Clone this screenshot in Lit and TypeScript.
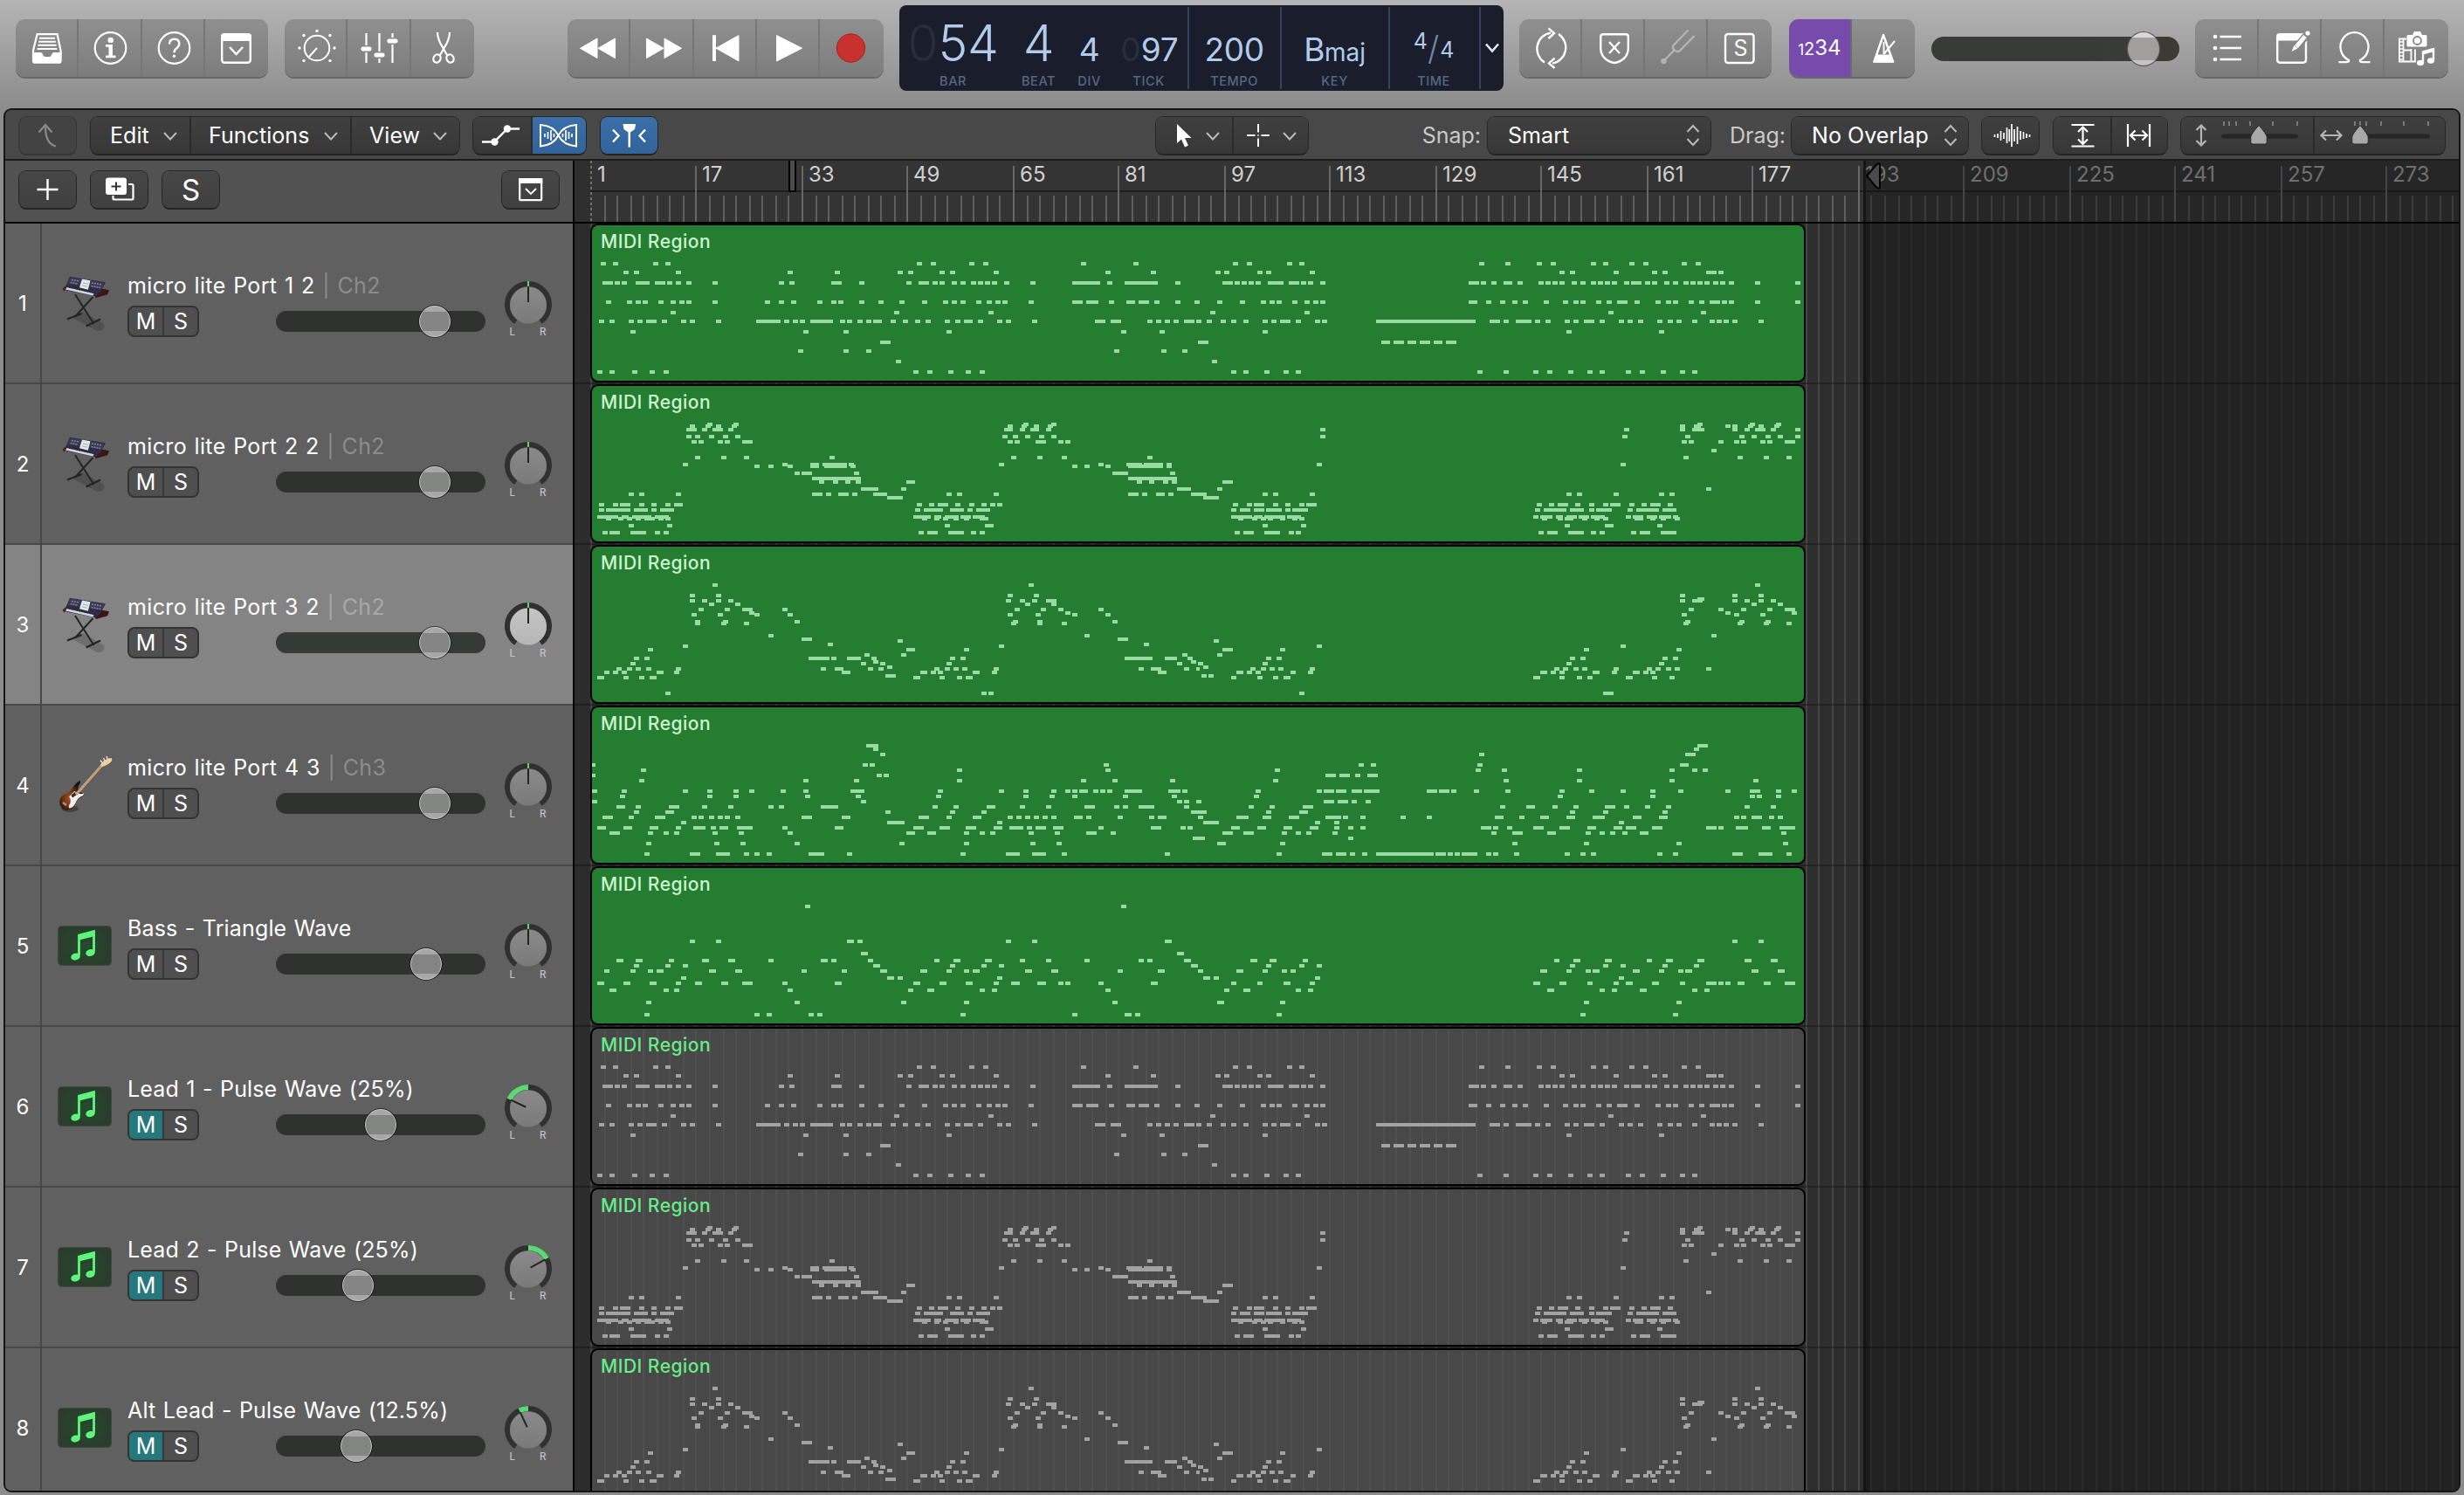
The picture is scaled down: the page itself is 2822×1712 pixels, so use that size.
import { LitElement, html, svg, css, nothing } from "lit";
import { customElement, property } from "lit/decorators.js";
import { classMap } from "lit/directives/class-map.js";

/* ------------------------------------------------------------------ */
/* MIDI patterns: one line per pitch, "offset: start start-end ...".    */
/* Starts are in ticks; each pattern is split in two halves.            */
/* ------------------------------------------------------------------ */
const TICKS_PER_PX = 2.24;
const HALF_PX = 700;

type Pattern = [string, string];

const LEAD: Pattern = [
  `42:40 72 175 206 851 887 986 1021 1272 1407
52:99 125 233 520 641 802 829 909 936 1048 1335 1452
64:45-72 76 94 130-166 179-206 211 233 260 327 497 524 632-659 703 824 856-883 892 909 941 963 990 1008 1026 1044 1075 1142 1250-1322 1340 1384-1469 1514
86:54 108 130 148 188 220 242 260 327 461 497 529 596 632 650 703 753 806 865 918 941 963 1004 1030 1053 1071 1138 1250-1277 1286-1317 1344 1390-1411 1420-1447 1460 1514 1563
98:220 793 1035
108:36 63 112 134 157-184 197 246 269 336 439-502 511 533 551 578-636 654 672 699 721 739-762 784 815 847 874 923 950 972-995 1008 1057 1080 1147 1308-1335 1348-1375 1443 1465 1487 1510 1537-1564
120:116 560 663 927 1375 1474
132:757-784
142:547 663 721 1357 1478 1532
154:797
166:31 63 121 166 202 842 878 932 977 1012`,
  `42:94 130 233 264 726 793 874 909 1012 1044 1111 1147 1245 1281
52:49 72 157 179 291 932 959 1071 1169 1196 1308-1335 1340
64:67-94 99 117 134 152 184-224 238-265 269 287 318 699-726 730 757 788-811 824 878 896 914 932 963 985 1012 1030 1048 1066 1098 1116-1142 1151 1169 1201 1223 1250 1268 1286 1304 1326 1344 1366 1434 1537
86:54 112 166 188 206 246 278 300 318 699-721 744 780 811 838 892 941 968 986 1026 1053 1080-1107 1124 1178 1205 1223 1263 1290 1317-1344 1348 1366 1434 1537
98:36 278 1057 1295
108:0-13 27 63 90 121 170 193 215-242 255 305 323 461-717 753-780 788 820-860 869 896 945 968 995-1021 1035 1084 1107 1133 1183 1210 1232 1272 1317 1335 1353 1375 1443
120:170 950 1187
132:4-31 475-497 506-533 542-564 573-600 609-632 641-668
154:40
166:90 121 175 224 255 721 788 865 900 954 1004 1035 1102 1138 1192 1241 1272`,
];

const SECOND: Pattern = [
  `42:314 381 1124 1196
44:269 309 336 377 1084 1120 1151 1189
48:260-287 301 327-354 367-381 1075-1098 1116 1142-1165 1183
56:260 282 318 354 385 1071 1098 1129 1165 1196
62:273 291 340 358 403-430 1084 1102 1156-1183 1214 1232
80:282 349 408 627 1093 1160 1223 1443
88:251 506 578-600 609-672 676-690 1062 1317 1389-1427 1432-1483 1492
90:435 470 520 578-600 614-672 681-694 1250 1281 1335 1394-1483 1492
98:538 556-582 690 1353-1393 1501
104:582-708 1393-1519
108:600 636 667 694-708 824-847 1416 1447 1483 1505-1519
116:708-753 811 1519-1555
122:112 139 233 582-609 618 650-676 685 739-775 927 954 1048 1393-1420 1429 1465-1487 1496 1555-1568
126:775-815
134:36 72 90-116 139 170 206 228-251 851 883 905-932 950 986 1017 1039 1057
140:36 54-116 125-161 170 193-228 847 869-918 936-972 981 1004-1039
148:31-85 92-112 121-172 178-215 842-888 896-914 923-959 963-990 995-1026
150:54 85 108 130 152 166 188 206-220 865 896 918 945 972 1012 1021
158:112 211 923 1026-1048
166:45 63-90 116-157 179 202 856 878-905 932-972 990 1012`,
  `42:1286 1420 1487
44:1241 1277-1295 1357 1375 1416 1443 1483
48:318 1098 1241 1272-1304 1375 1407 1434-1461 1474 1537
56:318 1093 1254 1393 1425 1460 1492 1537
62:1245 1263 1340 1380 1398 1447 1465 1510-1537
72:1322
80:1250 1389 1456 1514
88:309 1089
108:67-94
116:54 1308
122:0-27 170 197 291 950 977 1071 1187 1214
126:18-58
134:94 130 148-175 197 228 264 282-309 874 905 927-954 972 1008 1044 1062-1089 1111 1142 1165-1192 1210
140:90 112-139 148-175 179-220 228 246-287 869 892-950 959-995 1008 1026-1066 1107 1129-1187 1196-1232
148:90-143 148-170 175-228 233-270 865 883-914 923-940 950-977 981-1008 1012-1048 1102 1120-1147 1156-1183 1187-1219 1223
150:108 143 166 184 215 246 264 887 927 945-968 990 1021 1044 1124-1147 1165 1192 1228
158:170 269 945 1048-1071 1183
166:99 121-148 175-215 238 255 878 900-927 954-995 1012 1035 1116 1138-1165 1192-1232`,
];

const ALT: Pattern = [
  `42:327 1138
54:269 336 1084 1151
60:269 300 336 367 1080 1116 1147 1183-1210
64:318 385 1129 1196
70:291 358 403-430 506 1102 1169 1214 1317
74:421 1232
76:273 340 435 520 1084 1156 1250 1335
84:282 354 538 1098 1162 1353
86:282 349 408 1093 1160 1223
100:470 1281
104:556-582 1366-1393
106:802
110:623 1434
112:251 1062
116:161 824-847 972
122:717 811 1532
126:125 152 573-627 632 672-708 735 936 963 1384-1456 1487-1519 1545
130:739 1555
132:116 708 757 927 1519
136:775
138:81 108 130 157 233 605 641-663 726 753 896 923 945 968 1048 1420 1452-1478 1537
142:49 72 94 184-202 228 659-681 860-878 887 905 995-1012 1044 1469-1492
146:771-797
148:31-49 99 139 166-184 842-860 909 954 977-995
166:206 1017 1035`,
  `42:1434
54:1241 1375 1443
58:1286-1304
60:1241 1272-1299 1375 1407 1443 1474
64:1425 1492
70:1263 1340 1398 1465 1510-1537
74:1357 1528
76:1245 1380 1447
84:1254 1393 1460
86:1250 1389 1456 1514
100:1322
106:45
112:309 1089
116:67-94 215 995 1232
122:54
126:179 206 959 986 1196 1223
132:4 170 950 1187
136:18
138:0-9 139 166 188 211 291 918 941 968 990 1071 1156 1178 1205 1228 1308
142:103-121 130 152 242 287 883-900 909 932 1017-1035 1066 1120-1138 1147 1165
146:13 31
148:90 157 197 224-242 865-883 932 977 1004 1102-1120 1169 1214
166:264 1044-1071`,
];

const FOURTH: Pattern = [
  `42:721-753
46:739
52:757
64:18-27 712 730 1331
70:143 954 1335
76:18-27 748 766
82:139 560 690 954 1272 1353 1501
94:18-31 94 251 314 381 421 502 560 681-717 905 1062 1124 1196 1232 1250 1268-1290 1304 1322 1340 1384-1429 1496-1528 1532
100:90 314 381 564 694 900 1124 1192 1250 1380 1505
106:18-31 708 1519 1537
112:81-103 130 215-242 300 367 470 497 605-650 892 945 1030-1053 1116 1183 1281-1308 1357 1380 1420-1460 1537
118:125 206-228 771 936 1017 1555-1568
124:45-72 112 179-206 273 291 318 340 358 385 556-582 659-681 856-883 927 995-1017 1084 1107 1129 1151 1174 1196 1254-1277 1286 1366 1447 1469-1492
130:246 775-820 1057
136:31-54 99-121 166-188 233 278-309 323 345-367 390-430 506 641-663 842-869 909-936 977-1004 1048-1071 1089-1124 1133 1156-1183 1201-1228 1317 1452-1478 1528 1546
142:63-90 161 202 228 327 394 520 824-847 878-900 972 1012 1039 1138 1205 1286-1313 1348
148:1559
154:157 332 399 538 806 972 1142 1210
166:152 269-296 336-372 408 435 466 573-614 672 963 1080-1116 1147-1183 1223 1487`,
  `42:1286-1313
46:1277
52:726 1254-1281
64:417 448 721 1241-1263
70:202 717 784 977 1214 1272 1299
76:332-358 367-394 408 439-466
82:197 788 977 1214 1429
94:152 309 327-354 358-385 399-426 430-470 591-618 623-650 654 712 793 932 1008 1089 1165 1236 1357 1420-1447 1487 1528
100:148 927 1165 1420 1438 1487
106:0-13 327-354 363-390 399 435
112:134 188 273-300 780 847-869 914 968 1048-1075 1098 1151 1205 1407 1474
118:0-27 179 264-287 959 1044 1196
124:4 103-134 170-193 238-264 332-372 376 421 524 591 766-788 829 883-905 950-972 1017-1048 1120-1142 1187-1210 1380 1398 1425-1452 1469 1492
130:18-58 305 354 1084
136:90-112 157-179 224-246 291-314 354 390 421 730-757 762 797 865-892 932-959 1004-1026 1071-1093 1102-1129 1169-1196 1308-1335 1340 1384-1416 1452-1474 1496-1537
142:67-94 121-148 220 255 282 349 757 811-838 900-923 999 1035 1062 1093 1138-1160 1501
148:0 9 390
154:54-76 215 811 995 1232 1505
166:206 323-349 358-385 394 426 461-609 614-641 645 663 681-721 744 762 815 945 986 1012 1183 1223 1375-1402 1443-1478 1514`,
];

const BASS: Pattern = [
  `42:564 1375
82:269 336 672-690 699 1080 1147 1487-1505
96:708-726 1519-1537
104:81-99 130-148 215 300-318 367-385 470 605-623 632 726 896 945-963 1026-1044 1116 1183 1281 1420 1443 1537-1555
110:125 206 251 739-757 936 1017 1062 1555-1568
116:49 116 161 184-202 318-336 385-403 556 659 757-775 860-878 927 972 995-1012 1129-1147 1196-1214 1366 1469-1487
124:246 775-793 802 1057
130:31-49 99-116 166-184 233 282-300 349-367 403-430 506 641-659 842-860 909-927 977-995 1048 1093-1116 1160-1183 1214 1232 1317 1452-1469
138:63-81 202 228 520 829 878-896 1012 1044 1335
152:157 538 811 972 1353
166:152 435 466 573-587 596 963 1250 1384-1402 1411`,
  `82:1375 1443
104:139-157 188-206 273 918 968-986 1048-1066 1156 1205-1223 1286-1304 1407-1425 1474-1492
110:0-4 179 264 309 959 1044 1089 1196 1277
116:4 103-121 170 220 242 883-900 950 999 1017-1035 1120-1138 1187 1236 1254-1272 1425-1443 1492-1510
124:18-36 45 305 1084
130:90 157 224-242 291 865-883 932-950 1004 1071 1102-1120 1169-1187 1241 1308-1335 1340 1357 1389-1407 1456-1474 1510-1537
138:72 121-139 255 287 900-918 1035 1066 1138-1156 1272 1304
152:54-72 215 995 1232
166:206 986 1223`,
];

/** Turns a pattern into one path of 4px-high note bars. */
function notePath(pattern: Pattern): string {
  let d = "";
  pattern.forEach((half, i) => {
    for (const line of half.split("\n")) {
      const [y, notes] = line.trim().split(":");
      for (const note of notes.split(" ")) {
        const [a, b] = note.split("-").map(Number);
        const snap = (t: number) => Math.round(t / TICKS_PER_PX / 2) * 2 + i * HALF_PX - 8;
        const x = snap(a);
        const w = b === undefined ? 6 : Math.max(2, snap(b) - x);
        d += `M${x} ${y}h${w}v4h${-w}z`;
      }
    }
  });
  return d;
}

/* ------------------------------------------------------------------ */
/* Data                                                                 */
/* ------------------------------------------------------------------ */
interface Track {
  name: string;
  channel?: string;
  icon: "keys" | "bass" | "note";
  volume: number;
  pan: number;
  muted?: boolean;
  selected?: boolean;
  pattern: Pattern;
}

const TRACKS: Track[] = [
  { name: "micro lite Port 1 2", channel: "Ch2", icon: "keys", volume: 164, pan: 0, pattern: LEAD },
  { name: "micro lite Port 2 2", channel: "Ch2", icon: "keys", volume: 164, pan: 0, pattern: SECOND },
  { name: "micro lite Port 3 2", channel: "Ch2", icon: "keys", volume: 164, pan: 0, selected: true, pattern: ALT },
  { name: "micro lite Port 4 3", channel: "Ch3", icon: "bass", volume: 164, pan: 0, pattern: FOURTH },
  { name: "Bass - Triangle Wave", icon: "note", volume: 154, pan: 0, pattern: BASS },
  { name: "Lead 1 - Pulse Wave (25%)", icon: "note", volume: 102, pan: -65, muted: true, pattern: LEAD },
  { name: "Lead 2 - Pulse Wave (25%)", icon: "note", volume: 76, pan: 61, muted: true, pattern: SECOND },
  { name: "Alt Lead - Pulse Wave (12.5%)", icon: "note", volume: 74, pan: -25, muted: true, pattern: ALT },
];

/* Timeline geometry, measured from the left edge of the timeline. */
const BAR_ONE = 18;
const TWO_BARS = 15.123;
const END_OF_SONG = 1476;
const TIMELINE_WIDTH = 2158;
const gridX = (k: number) => Math.round((BAR_ONE + k * TWO_BARS) / 2) * 2;

/* ------------------------------------------------------------------ */
/* Icons                                                                */
/* ------------------------------------------------------------------ */
const cell = (w: number, h: number, body: unknown) =>
  html`<svg width=${w} height=${h} viewBox="0 0 ${w} ${h}" fill="none" stroke="#fff" stroke-width="2.4">${body}</svg>`;
const big = (body: unknown) => cell(72, 66, body);
const small = (w: number, body: unknown) => cell(w, 42, body);

const boxChevron = svg`
  <rect x="19.2" y="17.2" width="32.6" height="32.6" rx="3"/>
  <path d="M18 20q0-4 4-4h27q4 0 4 4v5H18z" fill="#fff" stroke="none"/>
  <path d="M28 32l7.5 8 7.5-8"/>`;

const ICONS = {
  library: big(svg`
    <path d="M24.6 17.2h23l4 19v11.500q0 2-2 2H22q-2 0-2-2V36z" stroke-width="2.200"/>
    <path d="M19.500 38h9q2 0 2.600 2.500t3 2.500h4q2.400 0 3-2.500t2.600-2.500h9l-1 10q-.3 2-2 2H22q-1.700 0-2-2z" fill="#fff" stroke="none"/>
    <path d="M27 21.700h18M26.200 25.700h19.600M25.400 29.700h21.200M24.600 34h22.800" stroke-width="2"/>`),
  info: big(svg`
    <circle cx="36.500" cy="33" r="17.800" stroke-width="2.200"/>
    <circle cx="36.700" cy="24" r="3.200" fill="#fff" stroke="none"/>
    <path d="M31 29h8v12.500h3.500v2.700H31v-2.700h3.500v-9.700H31z" fill="#fff" stroke="none"/>`),
  help: big(svg`
    <circle cx="36.500" cy="33" r="17.800" stroke-width="2.200"/>
    <path d="M31 28.500q0-5.800 5.700-5.800 5.600 0 5.600 5.300 0 3-3 5.200-2.800 2-2.800 5"/>
    <circle cx="36.500" cy="42.300" r="1.700" fill="#fff" stroke="none"/>`),
  toolbarBox: big(boxChevron),
  dial: big(svg`
    <circle cx="37" cy="33" r="14.300" stroke-width="2"/>
    <path d="M37 33L28 43" stroke-width="2"/>
    <g fill="#fff" stroke="none"><circle cx="37" cy="13.500" r="1.700"/><circle cx="22" cy="18.500" r="1.700"/><circle cx="52" cy="18.500" r="1.700"/>
    <circle cx="17" cy="33" r="1.700"/><circle cx="57" cy="33" r="1.700"/><circle cx="22" cy="47.500" r="1.700"/><circle cx="52" cy="47.500" r="1.700"/></g>`),
  mixer: big(svg`
    <path d="M21.500 16v14M21.500 38v12M36.500 16v21M36.500 45v5M51.500 16v5M51.500 29v21" stroke-width="2.200"/>
    <g fill="#fff" stroke="none"><rect x="15.500" y="31.500" width="12" height="5" rx="2"/><rect x="30.500" y="38.500" width="12" height="5" rx="2"/><rect x="45.500" y="22.500" width="12" height="5" rx="2"/></g>`),
  scissors: big(svg`
    <path d="M30 15q0 5 3 12l8.500 15M44 15q0 5-3 12l-8.500 15" stroke-width="2.200"/>
    <ellipse cx="29.500" cy="45" rx="4" ry="4.800" transform="rotate(25 29.500 45)" stroke-width="2.200"/>
    <ellipse cx="44.500" cy="45" rx="4" ry="4.800" transform="rotate(-25 44.500 45)" stroke-width="2.200"/>`),
  rewind: big(svg`<path d="M14.500 33.300L34 22v22.600zM35 33.300L54.500 22v22.600z" fill="#fff" stroke="#fff" stroke-width="1" stroke-linejoin="round"/>`),
  forward: big(svg`<path d="M58.500 33.300L39 22v22.600zM38 33.300L18.500 22v22.600z" fill="#fff" stroke="#fff" stroke-width="1" stroke-linejoin="round"/>`),
  toStart: big(svg`<path d="M21 18.300h4v29.700h-4z" fill="#fff" stroke="none"/><path d="M25 33.200L51 18.500v29.400z" fill="#fff" stroke-width="1" stroke-linejoin="round"/>`),
  play: big(svg`<path d="M22.500 18.500L51.500 33.200 22.500 48z" fill="#fff" stroke-width="1" stroke-linejoin="round"/>`),
  record: big(svg`<circle cx="35.500" cy="33" r="16.300" fill="#c8312d" stroke="#a32521" stroke-width="1"/>`),
  cycle: big(svg`
    <path d="M29 49.500A18.500 18.500 0 0 1 36 15.600M45 17A18.500 18.500 0 0 1 38 50.600" stroke-width="2.400"/>
    <path d="M33.500 10.500l6.500 5.500-6.500 6M40.500 56l-6.500-5.500 6.500-6"/>`),
  replace: big(svg`
    <path d="M24 17.200h26q2.800 0 2.800 2.800v13q0 7.500-5 12-5.500 4.500-10.800 5-5.500-.5-10.800-5-5-4.500-5-12V20q0-2.800 2.800-2.800z"/>
    <path d="M31 26l12 13M43 26l-12 13"/>`),
  tuner: big(svg`<g stroke="#b4b4b4"><path d="M21 48L33.500 35.500M49.500 12.500L32.500 30q-1.500 2.500 1 5.500 3.500 2.500 6 1L56.500 19"/><circle cx="21.500" cy="48" r="2" fill="#b4b4b4"/></g>`),
  solo: big(svg`<rect x="20" y="17" width="32.500" height="33" rx="3"/>`),
  metronome: big(svg`
    <path d="M36 18L25.500 48.500h21.500z" stroke-linejoin="round"/><path d="M27.500 40.500h17.500l3.500 9H24z" fill="#fff" stroke="none"/>
    <path d="M36.500 40L49 25M36.500 26v14" stroke-width="2"/>`),
  list: big(svg`<g fill="#fff" stroke="none"><circle cx="23" cy="20" r="2.300"/><circle cx="23" cy="33" r="2.300"/><circle cx="23" cy="46" r="2.300"/></g><path d="M28.500 20H53M28.500 33H53M28.500 46H53"/>`),
  notepad: big(svg`
    <path d="M54 24v22.500q0 3.200-3.200 3.200H24.400q-3.200 0-3.200-3.200V19"/>
    <path d="M20 24.500V20q0-4 4-4h27l-7 8.500z" fill="#fff" stroke="none"/>
    <path d="M54.500 19L40.500 35.500" stroke="#868686" stroke-width="8"/>
    <path d="M53 19.500L43 31.500" stroke-width="5"/><path d="M40.500 30l4 3.500-7 3.500z" fill="#fff" stroke="none"/><circle cx="56" cy="16" r="2.600" fill="#fff" stroke="none"/>`),
  loop: big(svg`<path d="M19.500 49.200h8.500q4-.5 3-2.500A16 16.500 0 1 1 44 46.700q-1 2 3 2.500h8.500" stroke-width="2.300"/>`),
  media: big(svg`
    <path d="M25 22.500h-8v26h18v-14M21.500 23v25M30.500 34v14M21.500 35.500H31" stroke-width="1.800"/>
    <path d="M17 26h4M17 30h4M17 34h4M17 38h4M17 42h4M17 46h4" stroke-width="1.600"/>
    <path d="M27 18h5l2-4h7l2 4h4q1.500 0 1.500 1.500V30q0 1.500-1.500 1.500H27q-1.500 0-1.500-1.500V19.500Q25.500 18 27 18z" fill="#fff" stroke="none"/>
    <circle cx="37.500" cy="24.500" r="4.500" fill="#fff" stroke="#868686" stroke-width="1.800"/>
    <path d="M44 50V37.500l12-3.500v13" stroke-width="2.400"/><path d="M44 39l12-3.500" stroke-width="3"/>
    <ellipse cx="41" cy="50" rx="4" ry="3.200" fill="#fff" stroke="none"/><ellipse cx="53" cy="47.500" rx="4" ry="3.200" fill="#fff" stroke="none"/>`),
  up: small(65, svg`<path d="M42 33.500q-12-3-12-22M22.500 17.500L30 9l7.500 8.500" stroke="#8a8a8a" stroke-width="2.200"/>`),
  automation: small(66, svg`<path d="M10 28.500h14L39 13.500h14" /><circle cx="24.500" cy="28.500" r="4.200" fill="#fff" stroke="none"/><circle cx="39" cy="13.500" r="4.200" fill="#fff" stroke="none"/>`),
  flexMode: small(63, svg`
    <path d="M11 9v24.500Q26 32 31.500 21T52 9v24.500Q37 32 31.500 21T11 9z" stroke-width="2"/>
    <path d="M16 19v4M19.500 17v8M23 15v12M26.500 19v4M36.500 19v4M40 15v12M43.500 17v8M47 19v4" stroke-width="1.700"/>`),
  catch: small(65, svg`<path d="M14 14.500l6.500 7-6.500 7M51 14.500l-6.500 7 6.500 7"/><path d="M25.500 8h14.500l-1 6-5 3.500v17h-2.500v-17l-5-3.500z" fill="#fff" stroke="none"/>`),
  pointer: small(50, svg`<path d="M24 8v22l5-4.500 4 9 4-2-4-8.500h7.500z" fill="#fff" stroke="none"/>`),
  marquee: small(50, svg`<path d="M30 8v9.500M30 24.500V34M17 21h9.500M33.500 21H43" stroke-width="2"/><path d="M29.200 20.200h1.600v1.600h-1.600z" fill="#fff" stroke="none"/>`),
  wave: small(65, svg`<path d="M14.500 20v3M18 19v5M21.500 16v11M25 18v7M28.500 12v18M34 8v26M31.300 14v14M37 14v14M40.500 11v20M44 16v10M47.500 17v8M51 19v5M54.500 20v3" stroke-width="1.700"/>`),
  vZoom: small(65, svg`<path d="M20.500 9h26M20.500 33.500h26M33.500 11.500v19.500M28 17l5.500-5.500L39 17M28 25.500l5.500 5.500 5.500-5.500" stroke-width="2.200"/>`),
  hZoom: small(65, svg`<path d="M20 8v26M45 8v26M23.500 21h18M28.500 15.500L23 21l5.500 5.500M36.500 15.500L42 21l-5.500 5.500" stroke-width="2.200"/>`),
  plus: small(65, svg`<path d="M32.500 9v24M20.500 21h24" stroke-width="2.400"/>`),
  duplicate: small(65, svg`<path d="M43 15h4q1.500 0 1.500 1.500V31q0 1.500-1.500 1.500H27q-1.500 0-1.500-1.500v-3" stroke-width="2.200"/><path d="M20 7.500h18q3 0 3 3V24q0 3-3 3H20q-3 0-3-3V10.500q0-3 3-3z" fill="#fff" stroke="none"/><path d="M29 12.500v10M23.500 17.500h11" stroke="#333" stroke-width="2"/>`),
  headerBox: small(65, svg`<rect x="20.200" y="9.200" width="25" height="24" rx="1.500" stroke-width="2.200"/><path d="M19 8h27.300v6H19z" fill="#fff" stroke="none"/><path d="M27 20l6 6 6-6" stroke-width="1.800"/>`),
  chevron: html`<svg class="chev" width="16" height="10" viewBox="0 0 16 10" fill="none" stroke="#b9b9b9" stroke-width="2"><path d="M1 1l7 7.500L15 1"/></svg>`,
  upDown: html`<svg width="16" height="26" viewBox="0 0 16 26" fill="none" stroke="#b9b9b9" stroke-width="2"><path d="M1.500 9L8 2l6.500 7M1.500 17L8 24l6.500-7"/></svg>`,
};

const keysIcon = html`<svg width="58" height="72" viewBox="-1 0 58 72">
  <path d="M12 52l30 16q10 0 8-8L26 46z" fill="#000" opacity=".16"/>
  <path d="M17 26L38.500 60M37.500 29L17.500 51" stroke="#242428" stroke-width="2"/>
  <path d="M8 54.500l16.500-6.500M29.500 62.500l16.500-8" stroke="#242428" stroke-width="2.400"/>
  <path d="M45 19l11 2.300-2 5L41 30l-2-3z" fill="#3a1614"/>
  <path d="M11 5.700l41 6.600-6 11-5 5L2.700 20.700l4-5z" fill="#2a2c48"/>
  <path d="M12 6.500l39 6.300-4 7L8.500 14z" fill="#3a3b58"/>
  <path d="M13 9.500l9 1.500M11.500 12.500l9 1.500M36 13l12 2M35.500 16.500l11 2" stroke="#8b7f8a" stroke-width="1.500" stroke-dasharray="2 1"/>
  <path d="M7.500 18l31 7-1 2.500-31.500-7z" fill="#d4d4d8"/>
  <path d="M10 17.800l28 6.400" stroke="#2b2b36" stroke-width="1.500" stroke-dasharray="1.600 1.400"/>
  <path d="M2.500 19.500l3.500-3 1.500 1-3 5z" fill="#5c1d1d"/>
  <path d="M25 8.500l9.500 1.800-2.700 10.400L22 18.300z" fill="#e2e8ea"/>
  <path d="M26 13l6 1.200M25 16l6 1.200" stroke="#9fb3b3" stroke-width="1"/>
</svg>`;

const bassIcon = html`<svg width="64" height="68" viewBox="0 0 64 68">
  <defs><radialGradient id="b" cx=".42" cy=".6" r=".5"><stop offset="0" stop-color="#b0541c"/><stop offset=".6" stop-color="#6a2c10"/><stop offset="1" stop-color="#1a100d"/></radialGradient></defs>
  <ellipse cx="15" cy="61" rx="10" ry="4" fill="#000" opacity=".3"/>
  <path d="M26.700 28.700q1 3-2 6-1 4 0 6 3 3 7 2.500-1 5-5 5-3 2-5 7-3 7-9 7.500-6 .5-9-6-2-8 5-12 8-3 11-10 3-4 7-6z" fill="url(#b)"/>
  <path d="M20.500 41q3 2.500 6 3t5-1q-1 4-4.500 4.500-3.500 2-5.500 7-2.500 5.500-7 6-2-2 1-6 1-5-1.500-7z" fill="#f0f0f0"/>
  <path d="M16.500 45.500l4.500-3.500 2 3-5 3.500z" fill="#2a2a2a"/>
  <path d="M7 54l4 3" stroke="#999" stroke-width="2.500"/>
  <path d="M22 45L52 11" stroke="#c9a277" stroke-width="3"/>
  <path d="M24 43L51 12" stroke="#8d6a49" stroke-width=".8" stroke-dasharray="1 2.500"/>
  <path d="M50 12q1-4 4-6 4-3 8.500-3 1.500 1 0 4-3 3.500-10 6z" fill="#ecd0a4"/>
  <path d="M50 5.500l2 3M53.500 3l1.500 3M57 1l1 3" stroke="#ddd" stroke-width="1.500"/>
</svg>`;

const noteIcon = html`<svg width="62" height="46" viewBox="0 0 62 46">
  <defs><radialGradient id="g"><stop offset="0" stop-color="#264a2c"/><stop offset="1" stop-color="#2a3d2d"/></radialGradient></defs>
  <rect x=".500" y=".500" width="61" height="45" rx="4" fill="url(#g)" stroke="#3d4a3f"/>
  <path d="M24.500 34V11l17-4.500v23" fill="none" stroke="#5df57c" stroke-width="2.800"/>
  <path d="M24.500 10.500L42.800 6v6L24.500 16.500z" fill="#5df57c"/>
  <ellipse cx="20.500" cy="35.500" rx="5.300" ry="4" fill="#5df57c" transform="rotate(-15 20.500 35.500)"/>
  <ellipse cx="37.500" cy="31" rx="5.300" ry="4" fill="#5df57c" transform="rotate(-15 37.500 31)"/>
</svg>`;

const TRACK_ICONS = { keys: keysIcon, bass: bassIcon, note: noteIcon };

/* ------------------------------------------------------------------ */
/* Pan knob                                                             */
/* ------------------------------------------------------------------ */
@customElement("pan-knob")
export class PanKnob extends LitElement {
  @property({ type: Number }) pan = 0;
  @property({ type: Boolean }) lit = false;

  static styles = css`
    :host { display: block; width: 54px; height: 66px; }
    text { font: 500 11.5px Inter, "Liberation Sans", sans-serif; fill: #c4c4c4; }
  `;

  private polar(deg: number, r: number): [number, number] {
    const a = (deg * Math.PI) / 180;
    return [27 + r * Math.sin(a), 27 - r * Math.cos(a)];
  }

  render() {
    const arc = (from: number, to: number) => {
      const [x1, y1] = this.polar(from, 24);
      const [x2, y2] = this.polar(to, 24);
      return `M${x1} ${y1}A24 24 0 ${to - from > 180 ? 1 : 0} 1 ${x2} ${y2}`;
    };
    const p = this.pan;
    const [lx, ly] = this.polar(p, p ? 22 : 21);
    const [mx, my] = this.polar(p, 3);
    return html`<svg width="54" height="66" viewBox="0 0 54 66" fill="none">
      <defs><linearGradient id="k" x2="0" y2="1">
        <stop offset="0" stop-color=${this.lit ? "#c4c4c4" : "#8a8a8a"}/><stop offset="1" stop-color=${this.lit ? "#b6b6b6" : "#7a7a7a"}/>
      </linearGradient></defs>
      <path d=${arc(-144, 144)} stroke="#303030" stroke-width="6"/>
      <circle cx="27" cy="27.500" r="21" fill="url(#k)"/>
      <path d=${p === 0 ? "M27 0v6" : p < 0 ? arc(p, 0) : arc(0, p)} stroke="#5ad873" stroke-width=${p === 0 ? 2 : 6}/>
      <path d="M${lx} ${ly}L${mx} ${my}" stroke="#242424" stroke-width="2"/>
      <text x="5.500" y="62">L</text><text x="40" y="62">R</text>
    </svg>`;
  }
}

/* ------------------------------------------------------------------ */
/* Track header                                                         */
/* ------------------------------------------------------------------ */
@customElement("track-header")
export class TrackHeader extends LitElement {
  @property({ attribute: false }) track!: Track;
  @property({ type: Number }) index = 0;

  static styles = css`
    :host { display: block; height: 184px; flex: none; }
    .row { display: flex; box-sizing: border-box; height: 184px; background: #606060; border-bottom: 2px solid #484848; color: #fff; }
    .row.selected { background: #848484; }
    .num { width: 40px; flex: none; display: flex; align-items: center; justify-content: center; border-right: 2px solid #484848; font-size: 24px; }
    .icon { width: 98px; flex: none; display: flex; align-items: center; justify-content: center; box-sizing: border-box; }
    .main { display: flex; flex-direction: column; padding-top: 54px; width: 410px; flex: none; }
    .name { height: 34px; line-height: 34px; font-size: 25px; white-space: nowrap; letter-spacing: 0.15px; word-spacing: 1.2px; }
    .name.midi { letter-spacing: 0.35px; }
    .name .ch { color: #8c8c8c; }
    .selected .name .ch { color: #a8a8a8; }
    .controls { display: flex; align-items: center; height: 36px; margin-top: 6px; justify-content: space-between; }
    .ms { display: flex; width: 82px; height: 36px; box-sizing: border-box; border: 2px solid #333; border-radius: 8px; overflow: hidden; background: #4f4f4f; }
    .ms span { flex: 1; display: flex; align-items: center; justify-content: center; font-size: 25px; line-height: 32px; }
    .ms span + span { border-left: 2px solid #3a3a3a; }
    .ms .on { background: #27787d; }
    .fader { width: 240px; height: 24px; border-radius: 12px; background: #30322f; position: relative; }
    .selected .fader { background: #353a37; }
    .thumb { position: absolute; top: -6px; width: 34px; height: 34px; border-radius: 50%; border: 1px solid #c4c4c4; background: linear-gradient(#a8a8a8 17%, #838583 17% 82%, #a8a8a8 82%); box-shadow: 0 0 0 1px rgba(20, 20, 20, 0.7); }
    .pan { padding: 66px 0 0 22px; }
  `;

  render() {
    const t = this.track;
    return html`<div class=${classMap({ row: true, selected: !!t.selected })}>
      <div class="num">${this.index}</div>
      <div class="icon">${TRACK_ICONS[t.icon]}</div>
      <div class="main">
        <div class=${classMap({ name: true, midi: !!t.channel })}>${t.name}${t.channel ? html`<span class="ch"> | ${t.channel}</span>` : nothing}</div>
        <div class="controls">
          <div class="ms"><span class=${classMap({ on: !!t.muted })}>M</span><span>S</span></div>
          <div class="fader"><div class="thumb" style="left:${t.volume}px"></div></div>
        </div>
      </div>
      <div class="pan"><pan-knob .pan=${t.pan} .lit=${!!t.selected}></pan-knob></div>
    </div>`;
  }
}

/* ------------------------------------------------------------------ */
/* MIDI region                                                          */
/* ------------------------------------------------------------------ */
@customElement("midi-region")
export class MidiRegion extends LitElement {
  @property({ attribute: false }) track!: Track;

  static styles = css`
    :host { display: block; width: 1392px; height: 182px; }
    .region { display: grid; box-sizing: border-box; height: 182px; background: #257d32; border: 2px solid #000; border-radius: 9px; overflow: hidden; color: #cdf5cf; }
    .region > * { grid-area: 1 / 1; }
    .region svg { display: block; }
    .notes { fill: #9adba4; }
    .muted { background: #484848; color: #67ee8b; }
    .muted .notes { fill: #a2a2a2; }
    .label { padding: 5px 0 0 10px; font-size: 21px; font-weight: 500; line-height: 28px; height: 28px; letter-spacing: 0.5px; }
  `;

  render() {
    const bars = this.track.muted
      ? Array.from({ length: 92 }, (_, k) => `M${gridX(k + 1) - 20} 0h2v178h-2z`).join("")
      : "";
    return html`<div class=${classMap({ region: true, muted: !!this.track.muted })}>
      <svg width="1388" height="178" shape-rendering="crispEdges">
        <path d=${bars} fill="#505050"/>
        <path class="notes" d=${notePath(this.track.pattern)}/>
      </svg>
      <div class="label">MIDI Region</div>
    </div>`;
  }
}

/* ------------------------------------------------------------------ */
/* Ruler and lanes                                                      */
/* ------------------------------------------------------------------ */
@customElement("time-ruler")
export class TimeRuler extends LitElement {
  static styles = css`
    :host { display: block; height: 70px; width: 2158px; flex: none; border-bottom: 2px solid #000; }
    text { font: 24px Inter, "Liberation Sans", sans-serif; }
  `;

  render() {
    const ticks: unknown[] = [];
    for (let k = 0; k <= 141; k++) {
      const x = gridX(k);
      if (x > TIMELINE_WIDTH) break;
      const past = x > END_OF_SONG;
      const major = k % 8 === 0;
      if (k > 0)
        ticks.push(svg`<rect x=${x} y=${major ? 6 : 40} width="2" height=${major ? 64 : 30}
          fill=${past ? (major ? "#454545" : "#3b3b3b") : major ? "#686868" : "#5f5f5f"}/>`);
      if (major && k <= 136)
        ticks.push(svg`<text x=${x + 8} y="24" fill=${past || k === 96 ? "#6f6f6f" : "#d0d0d0"}>${k * 2 + 1}</text>`);
    }
    return html`<svg width="2158" height="70" style="display:block">
      <g shape-rendering="crispEdges">
        <rect width="2158" height="70" fill="#343434"/>
        <rect width="18" height="70" fill="#2f2f2f"/>
        <rect x=${END_OF_SONG} width="700" height="70" fill="#262626"/>
        <rect x="18" y="34" width="1458" height="2" fill="#1e1e1e"/>
        <rect x=${END_OF_SONG} y="34" width="700" height="2" fill="#181818"/>
        <path d="M19 0v70" stroke="#707070" stroke-width="2" stroke-dasharray="3 3"/>
        <rect x=${END_OF_SONG} width="3" height="70" fill="#161616"/>
      </g>
      ${ticks}
      <rect x="246" y="-2" width="7" height="37" fill="#4a4a4a" stroke="#000" stroke-width="2"/>
      <path d="M1480 17.500L1491 4.500q4-3 4 1v24q0 4-4 1z" fill="#4a4a4a" stroke="#000" stroke-width="2"/>
    </svg>`;
  }
}

@customElement("track-lanes")
export class TrackLanes extends LitElement {
  static styles = css`
    :host { display: grid; width: 2158px; height: 1451px; overflow: hidden; grid-template-rows: 1451px; }
    .grid, .lanes { grid-area: 1 / 1; }
    .grid { display: block; }
    .lane { box-sizing: border-box; height: 184px; padding-left: 18px; border-bottom: 2px solid rgba(0, 0, 0, 0.28); }
  `;

  render() {
    const near: string[] = [];
    const far: string[] = [];
    for (let k = 0; gridX(k) < TIMELINE_WIDTH; k++) {
      const x = gridX(k);
      (x > END_OF_SONG ? far : near).push(`M${x} 0h2v1451h-2z`);
    }
    return html`
      <svg class="grid" width="2158" height="1451" shape-rendering="crispEdges">
        <rect width="2158" height="1451" fill="#2e2e2e"/>
        <rect width="18" height="1451" fill="#2c2c2c"/>
        <path d=${near.join("")} fill="#464646"/>
        <rect x=${END_OF_SONG} width="700" height="1451" fill="#222"/>
        <path d=${far.join("")} fill="#2b2b2b"/>
        <rect x=${END_OF_SONG} width="3" height="1451" fill="#131313"/>
        <rect x=${END_OF_SONG + 3} width="5" height="1451" fill="#1c1c1c"/>
      </svg>
      <div class="lanes">
        ${TRACKS.map((t) => html`<div class="lane"><midi-region .track=${t}></midi-region></div>`)}
      </div>`;
  }
}

/* ------------------------------------------------------------------ */
/* Transport display                                                    */
/* ------------------------------------------------------------------ */
@customElement("transport-display")
export class TransportDisplay extends LitElement {
  static styles = css`
    :host { display: flex; box-sizing: border-box; width: 692px; height: 98px; background: #1a1d2c; border-radius: 8px; color: #b3cbea; }
    .sec { display: flex; margin: 2px 0; box-sizing: border-box; border-right: 2px solid #36445a; padding-top: 12px; justify-content: center; }
    .position { width: 332px; padding-left: 9px; justify-content: flex-start; }
    .tempo { width: 106px; } .key { width: 124px; } .time { width: 104px; padding-right: 1px; }
    .col { display: flex; flex-direction: column; align-items: center; flex: none; }
    .bar { width: 106px; margin-right: 17px; }
    .beat { width: 56px; margin-right: 2px; } .div { width: 56px; } .tick { width: 80px; }
    .val { height: 60px; line-height: 60px; font-size: 57px; font-weight: 300; white-space: nowrap; letter-spacing: -0.3px; }
    .val .m { font-size: 37px; line-height: 1; font-weight: 400; letter-spacing: -0.4px; }
    .tick .val .m { letter-spacing: 0; margin-left: 2px; }
    .val .s { font-size: 28px; line-height: 1; font-weight: 400; letter-spacing: 0; }
    .val .up { font-size: 25px; line-height: 0; font-weight: 400; position: relative; top: -14px; letter-spacing: 0; }
    .val .low { font-size: 25px; line-height: 0; font-weight: 400; position: relative; top: -4px; letter-spacing: 0; }
    .val .slash { font-size: 38px; line-height: 0; font-weight: 300; color: #7286a3; letter-spacing: 1px; position: relative; top: -1px; }
    .dim { color: #282d3c; }
    .cap { font-size: 14.5px; line-height: 18px; color: #576881; margin-top: 4px; font-weight: 500; letter-spacing: 0.6px; }
    .more { flex: 1; display: flex; align-items: center; justify-content: center; }
  `;

  render() {
    return html`
      <div class="sec position">
        <div class="col bar"><div class="val"><span class="dim">0</span>54</div><div class="cap">BAR</div></div>
        <div class="col beat"><div class="val">4</div><div class="cap">BEAT</div></div>
        <div class="col div"><div class="val"><span class="m">4</span></div><div class="cap">DIV</div></div>
        <div class="col tick"><div class="val"><span class="m"><span class="dim">0</span>97</span></div><div class="cap">TICK</div></div>
      </div>
      <div class="sec tempo"><div class="col"><div class="val"><span class="m">200</span></div><div class="cap">TEMPO</div></div></div>
      <div class="sec key"><div class="col"><div class="val"><span class="m">B</span><span class="s">maj</span></div><div class="cap">KEY</div></div></div>
      <div class="sec time"><div class="col"><div class="val"><span class="up">4</span><span class="slash">/</span><span class="low">4</span></div><div class="cap">TIME</div></div></div>
      <div class="more"><svg width="18" height="12" viewBox="0 0 18 12" fill="none" stroke="#dfe8f5" stroke-width="2.600"><path d="M2 1.500l7 8 7-8"/></svg></div>`;
  }
}

/* ------------------------------------------------------------------ */
/* Application                                                          */
/* ------------------------------------------------------------------ */
@customElement("app-root")
export class AppRoot extends LitElement {
  static styles = css`
    :host { display: block; width: 2822px; height: 1712px; overflow: hidden; font-family: Inter, "Liberation Sans", sans-serif; color: #fff; background: linear-gradient(#b4b4b4 0, #8c8c8c 124px, #8c8c8c 100%); }
    svg { display: block; flex: none; }
    .top { height: 124px; box-sizing: border-box; display: flex; padding: 6px 0 0 18px; }
    .group { display: flex; height: 66px; margin-top: 16px; border-radius: 11px; overflow: hidden; background: linear-gradient(#8f8f8f, #868686 50%, #7c7c7c); box-shadow: 0 2px 0 #686868; flex: none; }
    .group > div { width: 72.3px; height: 66px; box-sizing: border-box; border-right: 2px solid #767676; display: grid; place-items: center; flex: none; }
    .group > div > * { grid-area: 1 / 1; }
    .group > div:last-child { border-right: 0; }
    .group svg { justify-self: start; }
    .g2 { margin-left: 19px; } .g3 { margin-left: 107px; } .lcd { margin-left: 18px; flex: none; }
    .g4 { margin-left: 18px; } .g5 { margin-left: 20px; } .g6 { margin-left: 18px; }
    .group .count { background: #774bac; border-color: #6c6c6c; display: flex; align-items: baseline; justify-content: center; line-height: 66px; }
    .count .a { font-size: 17px; } .count .b { font-size: 20px; } .count .c { font-size: 24px; }
    .solo-s { font-size: 25px; margin-left: 2px; }
    .master { width: 284px; height: 28px; margin: 36px 0 0 19px; border-radius: 14px; background: linear-gradient(90deg, #373c39 60%, #3d3a35); position: relative; flex: none; }
    .master div { position: absolute; left: 224px; top: -6px; width: 36px; height: 38px; border-radius: 50%; border: 1px solid #555; background: linear-gradient(#d8d8d8 15%, #a09f9e 15% 85%, #c4c4c4 85%); }

    .window { margin-left: 4px; width: 2814px; height: 1585px; box-sizing: border-box; border: 2px solid #151515; border-radius: 9px; overflow: hidden; display: flex; flex-direction: column; background: #484848; }
    .tools { height: 58px; box-sizing: border-box; border-bottom: 2px solid #1c1c1c; padding: 8px 0 0 16px; display: flex; flex: none; background: #484848; width: 2810px; }
    .btn { display: flex; align-items: center; height: 42px; box-sizing: border-box; border-radius: 8px; background: linear-gradient(#404040, #373737); box-shadow: 0 0 0 1px #262626, 0 2px 0 #222; overflow: hidden; flex: none; font-size: 25px; letter-spacing: 0.05px; }
    .btn > * { flex: none; }
    .part { display: flex; align-items: center; height: 42px; box-sizing: border-box; }
    .part + .part { box-shadow: inset 2px 0 0 #2b2b2b; }
    .menu { padding: 0 14px 0 22px; justify-content: space-between; }
    .off { background: #434343; box-shadow: 0 0 0 1px #353535, 0 2px 0 #333; }
    .blue { background: linear-gradient(#3b6fa8, #32639b); }
    .label { font-size: 25px; line-height: 42px; color: #c9c9c9; text-align: right; flex: none; }
    .select { padding: 0 12px 0 23px; justify-content: space-between; }
    .chev { margin-top: 2px; }

    .body { display: flex; flex: 1; min-height: 0; }
    .left { width: 650px; flex: none; border-right: 2px solid #000; display: flex; flex-direction: column; overflow: hidden; }
    .right { display: flex; flex-direction: column; flex: none; width: 2158px; }
    .head { height: 72px; box-sizing: border-box; border-bottom: 2px solid #000; background: #525252; padding: 12px 16px 0 16px; display: flex; gap: 17px; flex: none; }
    .head .btn { width: 65px; background: linear-gradient(#464646, #404040); justify-content: center; }
    .head .end { margin-left: auto; }
    .head .s { font-size: 33px; }
  `;

  private zoomSlider(vertical: boolean) {
    const ticks = vertical ? [49, 55, 63, 79, 105, 133] : [48, 54, 61, 78, 104, 132];
    const x = vertical ? 89 : 54;
    const arrow = vertical
      ? "M23 9v24M17.500 15L23 9.500l5.500 5.500M17.500 27l5.500 5.500 5.500-5.500"
      : "M9 21h24M15 15.500L9.500 21l5.500 5.500M27 15.500L32.500 21 27 26.500";
    return cell(151, 42, svg`
      <path d=${arrow} stroke="#b4b4b4" stroke-width="2.200"/>
      <path d=${ticks.map((t) => `M${t} 5v5`).join("")} stroke="#8c8c8c" stroke-width="1.600"/>
      <rect x="46" y="19.500" width="88" height="5" rx="2.500" fill="#262626" stroke="none"/>
      <path d="M${x} 9.500q8 9 9.200 13v6q0 2.500-2.500 2.500h-13.400q-2.500 0-2.500-2.500v-6q1.200-4 9.200-13z" fill="#a9a9a9" stroke="#2a2a2a" stroke-width="1"/>`);
  }

  render() {
    const menu = (label: string, w: number) =>
      html`<div class="part menu" style="width:${w}px"><span>${label}</span>${ICONS.chevron}</div>`;
    return html`
      <div class="top">
        <div class="group"><div>${ICONS.library}</div><div>${ICONS.info}</div><div>${ICONS.help}</div><div>${ICONS.toolbarBox}</div></div>
        <div class="group g2"><div>${ICONS.dial}</div><div>${ICONS.mixer}</div><div>${ICONS.scissors}</div></div>
        <div class="group g3"><div>${ICONS.rewind}</div><div>${ICONS.forward}</div><div>${ICONS.toStart}</div><div>${ICONS.play}</div><div>${ICONS.record}</div></div>
        <transport-display class="lcd"></transport-display>
        <div class="group g4"><div>${ICONS.cycle}</div><div>${ICONS.replace}</div><div>${ICONS.tuner}</div><div>${ICONS.solo}<span class="solo-s">S</span></div></div>
        <div class="group g5"><div class="count"><span class="a">1</span><span class="b">2</span><span class="c">34</span></div><div>${ICONS.metronome}</div></div>
        <div class="master"><div></div></div>
        <div class="group g6"><div>${ICONS.list}</div><div>${ICONS.notepad}</div><div>${ICONS.loop}</div><div>${ICONS.media}</div></div>
      </div>
      <div class="window">
        <div class="tools">
          <div class="btn off" style="width:65px">${ICONS.up}</div>
          <div class="btn" style="margin-left:17px">${menu("Edit", 113)}${menu("Functions", 184)}${menu("View", 125)}</div>
          <div class="btn" style="margin-left:16px"><div class="part">${ICONS.automation}</div><div class="part blue">${ICONS.flexMode}</div></div>
          <div class="btn blue" style="margin-left:17px;width:65px">${ICONS.catch}</div>
          <div class="btn" style="margin-left:571px">
            <div class="part" style="width:87px">${ICONS.pointer}<span style="width:7px"></span>${ICONS.chevron}</div>
            <div class="part" style="width:87px">${ICONS.marquee}<span style="width:8px"></span>${ICONS.chevron}</div>
          </div>
          <div class="label" style="width:198px">Snap:</div>
          <div class="btn select" style="margin-left:8px;width:255px"><span>Smart</span>${ICONS.upDown}</div>
          <div class="label" style="width:86px">Drag:</div>
          <div class="btn select" style="margin-left:7px;width:202px"><span>No Overlap</span>${ICONS.upDown}</div>
          <div class="btn" style="margin-left:16px;width:65px">${ICONS.wave}</div>
          <div class="btn" style="margin-left:17px"><div class="part">${ICONS.vZoom}</div><div class="part" style="width:65px">${ICONS.hZoom}</div></div>
          <div class="btn" style="margin-left:16px"><div class="part">${this.zoomSlider(true)}</div><div class="part">${this.zoomSlider(false)}</div></div>
        </div>
        <div class="body">
          <div class="left">
            <div class="head">
              <div class="btn">${ICONS.plus}</div>
              <div class="btn">${ICONS.duplicate}</div>
              <div class="btn s">S</div>
              <div class="btn end">${ICONS.headerBox}</div>
            </div>
            ${TRACKS.map((t, i) => html`<track-header .track=${t} .index=${i + 1}></track-header>`)}
          </div>
          <div class="right">
            <time-ruler></time-ruler>
            <track-lanes></track-lanes>
          </div>
        </div>
      </div>`;
  }
}
